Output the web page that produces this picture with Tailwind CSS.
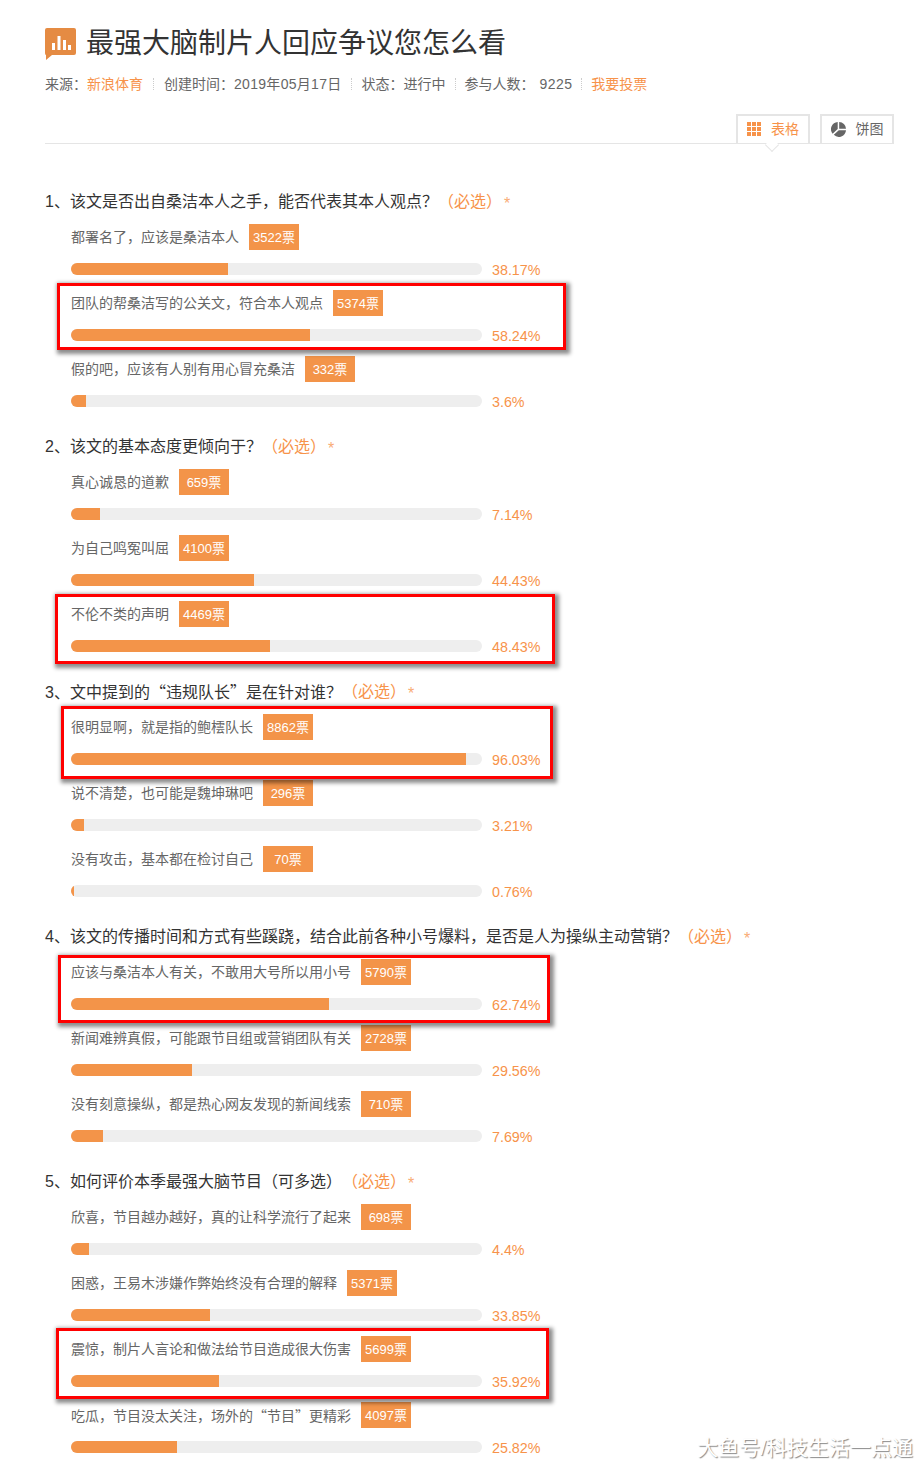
<!DOCTYPE html>
<html lang="zh-CN">

<head>
    <meta charset="UTF-8">
    <meta name="viewport" content="width=device-width, initial-scale=1.0">
    <script src="https://cdn.jsdelivr.net/npm/@tailwindcss/browser@4"></script>
    <title>最强大脑制片人回应争议您怎么看</title>
</head>

<body class="bg-white font-['Liberation_Sans','Noto_Sans_CJK_SC',sans-serif]">
    <main class="relative w-[924px] h-[1473px] overflow-hidden pl-[45px] pt-6">
        <div class="flex items-center h-9">
            <svg class="w-[31px] h-[32px] mt-1 mr-2.5 shrink-0" viewBox="0 0 31 32">
                <path d="M2 0H29Q31 0 31 2V25Q31 27 29 27H7L1 32V27Q0 27 0 25V2Q0 0 2 0Z" fill="#e58b43" />
                <rect x="7" y="15" width="3" height="7" fill="#fff" />
                <rect x="12.5" y="8" width="3" height="14" fill="#fff" />
                <rect x="18" y="12" width="3" height="10" fill="#fff" />
                <rect x="23" y="17" width="3" height="5" fill="#fff" />
            </svg>
            <h1 class="pt-1 text-[28px] leading-9 text-[#333]">最强大脑制片人回应争议您怎么看</h1>
        </div>

        <div class="flex items-center h-5 mt-[14px] text-sm text-[#666]">
            <span>来源&#xFF1A;</span><span class="text-[#f7934a]">新浪体育</span>
            <span class="mx-[10px] h-3 border-l border-dotted border-[#ccc]"></span>
            <span>创建时间&#xFF1A;<span class="tracking-[0.3px]">2019年05月17日</span></span>
            <span class="mx-[9.5px] h-3 border-l border-dotted border-[#ccc]"></span>
            <span>状态&#xFF1A;进行中</span>
            <span class="mx-[9px] h-3 border-l border-dotted border-[#ccc]"></span>
            <span>参与人数&#xFF1A;</span><span class="ml-[5px] tracking-[0.4px]">9225</span>
            <span class="mx-[9px] h-3 border-l border-dotted border-[#ccc]"></span>
            <span class="text-[#f7934a]">我要投票</span>
        </div>

        <div class="relative flex justify-end gap-[10px] w-[849px] h-[30px] mt-5 border-b border-[#e5e5e5] text-sm">
            <div class="flex items-center justify-center gap-2.5 w-[74px] h-[30px] pb-0.5 border-2 border-b-0 border-[#e5e5e5] text-[#f7934a]">
                <svg class="w-[14px] h-[14px]" viewBox="0 0 14 14" fill="#f7934a">
                    <rect width="4" height="4" /><rect x="5" width="4" height="4" /><rect x="10" width="4" height="4" />
                    <rect y="5" width="4" height="4" /><rect x="5" y="5" width="4" height="4" /><rect x="10" y="5" width="4" height="4" />
                    <rect y="10" width="4" height="4" /><rect x="5" y="10" width="4" height="4" /><rect x="10" y="10" width="4" height="4" />
                </svg>
                <span>表格</span>
            </div>
            <div class="flex items-center justify-center gap-2.5 w-[74px] h-[30px] pb-0.5 border-2 border-b-0 border-[#e5e5e5] text-[#666]">
                <svg class="w-[15px] h-[15px]" viewBox="0 0 15 15" fill="#666">
                    <path d="M6.7 0V6.9L1.6 11.7A7.2 7.2 0 0 1 6.7 0Z" />
                    <path d="M8.2 0A7.2 7.2 0 0 1 15 6.8H8.2Z" />
                    <path d="M7.8 8.2H15A7.2 7.2 0 0 1 2.8 12.8Z" />
                </svg>
                <span>饼图</span>
            </div>
            <div class="absolute left-[722px] top-[26px] w-[10px] h-[10px] rotate-45 bg-white border-r border-b border-[#e5e5e5]"></div>
        </div>

        <div id="questions" class="mt-[45px] w-[849px]"></div>

        <!-- red annotation frames drawn over the poll -->
        <div class="absolute left-[57px] top-[283px] w-[509px] h-[67px] border-[3px] border-[#f00] shadow-[2px_2px_4px_2px_rgba(0,0,0,0.45)]"></div>
        <div class="absolute left-[55px] top-[594px] w-[500px] h-[70px] border-[3px] border-[#f00] shadow-[2px_2px_4px_2px_rgba(0,0,0,0.45)]"></div>
        <div class="absolute left-[61px] top-[706px] w-[492px] h-[73px] border-[3px] border-[#f00] shadow-[2px_2px_4px_2px_rgba(0,0,0,0.45)]"></div>
        <div class="absolute left-[58px] top-[955px] w-[492px] h-[68px] border-[3px] border-[#f00] shadow-[2px_2px_4px_2px_rgba(0,0,0,0.45)]"></div>
        <div class="absolute left-[56px] top-[1328px] w-[493px] h-[71px] border-[3px] border-[#f00] shadow-[2px_2px_4px_2px_rgba(0,0,0,0.45)]"></div>

        <div class="absolute right-[11px] top-[1435px] text-[21px] leading-[26px] text-white [text-shadow:1px_1px_1px_#888]">大鱼号/科技生活一点通</div>
    </main>

    <script>
        // curly quotes need the CJK face, Liberation draws them half width
        const cjk = s => s.replace(/[\u201C\u201D]/g, m => `<span class="font-['Noto_Sans_CJK_SC']">${m}</span>`);

        const polls = [
            { title: '1、该文是否出自桑洁本人之手\uFF0C能否代表其本人观点\uFF1F', options: [
                ['都署名了\uFF0C应该是桑洁本人', '3522', 38.17],
                ['团队的帮桑洁写的公关文\uFF0C符合本人观点', '5374', 58.24],
                ['假的吧\uFF0C应该有人别有用心冒充桑洁', '332', 3.6],
            ] },
            { title: '2、该文的基本态度更倾向于\uFF1F', options: [
                ['真心诚恳的道歉', '659', 7.14],
                ['为自己鸣冤叫屈', '4100', 44.43],
                ['不伦不类的声明', '4469', 48.43],
            ] },
            { title: '3、文中提到的\u201C违规队长\u201D是在针对谁\uFF1F', options: [
                ['很明显啊\uFF0C就是指的鲍橒队长', '8862', 96.03],
                ['说不清楚\uFF0C也可能是魏坤琳吧', '296', 3.21],
                ['没有攻击\uFF0C基本都在检讨自己', '70', 0.76],
            ] },
            { title: '4、该文的传播时间和方式有些蹊跷\uFF0C结合此前各种小号爆料\uFF0C是否是人为操纵主动营销\uFF1F', options: [
                ['应该与桑洁本人有关\uFF0C不敢用大号所以用小号', '5790', 62.74],
                ['新闻难辨真假\uFF0C可能跟节目组或营销团队有关', '2728', 29.56],
                ['没有刻意操纵\uFF0C都是热心网友发现的新闻线索', '710', 7.69],
            ] },
            { title: '5、如何评价本季最强大脑节目\uFF08可多选\uFF09', options: [
                ['欣喜\uFF0C节目越办越好\uFF0C真的让科学流行了起来', '698', 4.4],
                ['困惑\uFF0C王易木涉嫌作弊始终没有合理的解释', '5371', 33.85],
                ['震惊\uFF0C制片人言论和做法给节目造成很大伤害', '5699', 35.92],
                ['吃瓜\uFF0C节目没太关注\uFF0C场外的\u201C节目\u201D更精彩', '4097', 25.82],
            ] },
        ];

        document.getElementById('questions').innerHTML = polls.map(q => `
            <section class="mb-[27px]">
                <div class="flex items-center h-6 pt-0.5 mb-[11px] text-base text-[#333]">
                    <span>${cjk(q.title)}</span>
                    <span class="text-[#f7934a]">&#xFF08;必选&#xFF09;</span>
                    <span class="ml-0.5 pt-1 text-base text-[#f9ab74]">*</span>
                </div>
                ${q.options.map(o => `
                    <div class="pl-[26px] mb-[15px] last:mb-0">
                        <div class="flex items-center h-[26px] text-sm text-[#666]">
                            <span>${cjk(o[0])}</span>
                            <span class="flex items-center justify-center w-[50px] h-[26px] pt-0.5 ml-2.5 bg-[#f39449] text-[13px] text-white">${o[1]}票</span>
                        </div>
                        <div class="flex items-center h-3 mt-[13px]">
                            <div class="w-[411px] h-3 rounded-md bg-[#eee] overflow-hidden">
                                <div class="h-3 bg-[#f39449]" style="width:${o[2]}%"></div>
                            </div>
                            <span class="ml-2.5 text-[14.3px] leading-3 pt-0.5 text-[#f7934a]">${o[2]}%</span>
                        </div>
                    </div>
                `).join('')}
            </section>
        `).join('');
    </script>
</body>

</html>
